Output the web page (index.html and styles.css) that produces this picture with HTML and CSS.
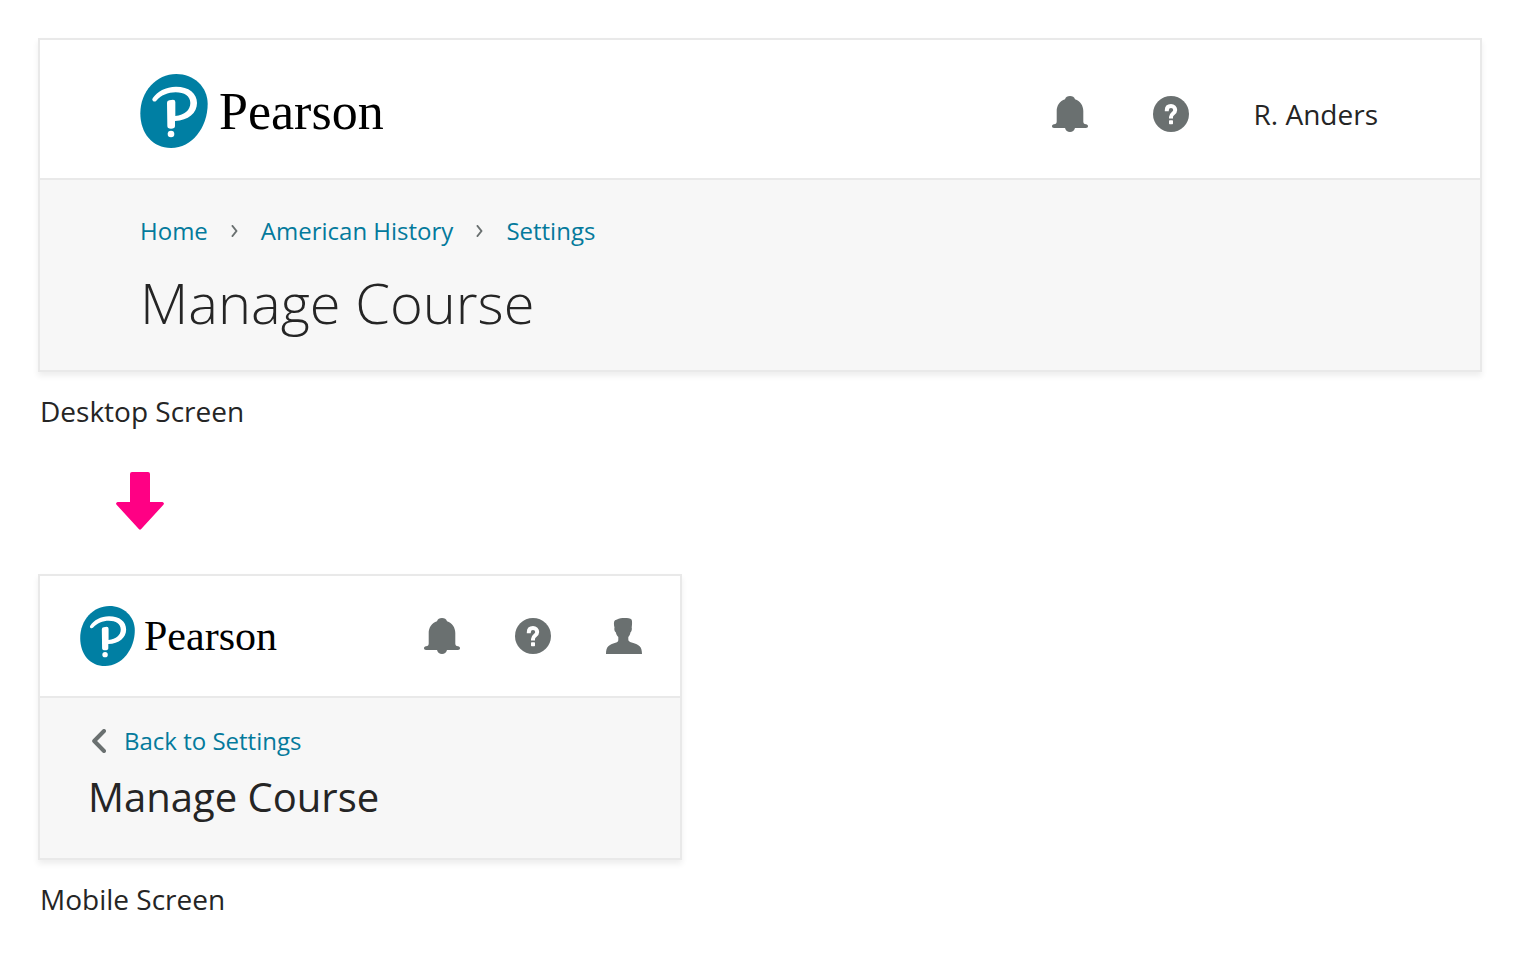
FILE: index.html
```html
<!DOCTYPE html>
<html lang="en">
<head>
<meta charset="utf-8">
<meta name="viewport" content="width=device-width, initial-scale=1">
<title>Manage Course</title>
<link rel="stylesheet" href="styles.css">
</head>
<body>
<svg class="sprite" aria-hidden="true">
  <symbol id="mark" viewBox="0 0 202 222">
    <path fill="#007fa3" d="M108 0C160 0 202 38 202 90C202 160 155 222 92 222C36 222 0 178 0 118C0 52 48 0 108 0Z"/>
    <path fill="#fff" d="M37 73C50 53 76 38 107 38C146 38 170 58 170 87C170 117 144 139 104 141L104 156Q104 164 92 164Q81 164 81 156L80 86Q80 80 87 79L98 77Q105 77 105 84L105 126C133 123 150 108 150 87C150 67 132 55 106 55C83 55 62 64 48 80Q43 85 38 81Q34 78 37 73Z"/>
    <circle cx="92" cy="180" r="10" fill="#fff"/>
  </symbol>
  <symbol id="bell" viewBox="0 0 36 36">
    <path fill="currentColor" d="M18 0C20.500 0 22.300 1.200 23 3.200C28.200 5 31.300 9.500 31.300 15V25.500C31.300 27.200 32 28 34 28.200C35.300 28.400 36 29.200 36 30.300C36 31.400 35.200 32 34 32H23C22.300 34.600 20.500 36 18 36S13.700 34.600 13 32H2C.8 32 0 31.400 0 30.300C0 29.200.7 28.400 2 28.200C4 28 4.700 27.200 4.700 25.500V15C4.700 9.500 7.800 5 13 3.200C13.700 1.200 15.500 0 18 0Z"/>
  </symbol>
  <symbol id="help" viewBox="0 0 36 36">
    <circle cx="18" cy="18" r="18" fill="currentColor"/>
    <path fill="none" stroke="#fff" stroke-width="4" d="M13.800 15.200V14.300C13.800 11.600 15.500 10 18 10S22.200 11.600 22.200 14C22.200 17.500 18 17.500 18 21V22.600"/>
    <rect x="16" y="24.300" width="4" height="3.900" rx=".7" fill="#fff"/>
  </symbol>
  <symbol id="user" viewBox="0 0 36 36">
    <path fill="currentColor" d="M11 1.500C13 .3 16 0 18.500 0C21.500 0 24.500.4 25.500 1.500C26.500 3 26 7 25.700 9.500C26.200 11 25.600 13.500 24.500 14.200C24.100 16.500 23.500 17.800 22.300 19V21.500C22.300 23.500 24 24 26.500 24.800C33 26.700 36 28.500 36 36H0C0 28.500 3 26.700 9.500 24.800C12 24 12.300 23.500 12.300 21.500V19C11 17.800 10.300 16.500 9.800 14.200C8.500 13.500 8 11 8.500 9.500C7.800 7 7.500 3.500 9 2.300Z"/>
  </symbol>
  <symbol id="next" viewBox="0 0 7 12">
    <path fill="none" stroke="#6a7070" stroke-width="2" stroke-linecap="round" stroke-linejoin="round" d="M1.500 1L5.500 6L1.500 11"/>
  </symbol>
  <symbol id="back" viewBox="0 0 18 24">
    <path fill="none" stroke="#6a7070" stroke-width="4" stroke-linecap="round" stroke-linejoin="round" d="M16 2L6.200 12L16 22"/>
  </symbol>
</svg>

<main class="page">
  <figure class="example">
    <div class="card">
      <header class="bar">
        <a class="brand" href="#"><svg class="brand-mark" aria-hidden="true"><use href="#mark"/></svg><span class="brand-name">Pearson</span></a>
        <div class="actions">
          <button class="action" type="button" aria-label="Notifications"><svg class="icon"><use href="#bell"/></svg></button>
          <button class="action" type="button" aria-label="Help"><svg class="icon"><use href="#help"/></svg></button>
          <button class="action" type="button">R. Anders</button>
        </div>
      </header>
      <div class="heading">
        <nav class="crumbs" aria-label="Breadcrumb">
          <a class="link" href="#">Home</a>
          <svg class="next" aria-hidden="true"><use href="#next"/></svg>
          <a class="link" href="#">American History</a>
          <svg class="next" aria-hidden="true"><use href="#next"/></svg>
          <a class="link" href="#">Settings</a>
        </nav>
        <h1 class="title">Manage Course</h1>
      </div>
    </div>
    <figcaption class="caption">Desktop Screen</figcaption>
  </figure>

  <svg class="arrow" viewBox="0 0 48 58" aria-hidden="true"><path fill="#ff0084" d="M16 0H32Q34 0 34 2V30H46.500Q49 31 47.200 33L25.200 57Q24 58.600 22.800 57L.8 33Q-1 31 1.500 30H14V2Q14 0 16 0Z"/></svg>

  <figure class="example">
    <div class="card card-mobile">
      <header class="bar">
        <a class="brand" href="#"><svg class="brand-mark" aria-hidden="true"><use href="#mark"/></svg><span class="brand-name">Pearson</span></a>
        <div class="actions">
          <button class="action" type="button" aria-label="Notifications"><svg class="icon"><use href="#bell"/></svg></button>
          <button class="action" type="button" aria-label="Help"><svg class="icon"><use href="#help"/></svg></button>
          <button class="action" type="button" aria-label="Account"><svg class="icon"><use href="#user"/></svg></button>
        </div>
      </header>
      <div class="heading">
        <a class="link back-link" href="#"><svg class="back" aria-hidden="true"><use href="#back"/></svg>Back to Settings</a>
        <h2 class="title">Manage Course</h2>
      </div>
    </div>
    <figcaption class="caption">Mobile Screen</figcaption>
  </figure>
</main>
</body>
</html>
```

FILE: styles.css
```css
* { box-sizing: border-box; }

body {
  margin: 0;
  background: #fff;
  color: #252525;
  font-family: "Open Sans", "Noto Sans", sans-serif;
}

.sprite { position: absolute; width: 0; height: 0; }

.page { padding: 38px; }

.example { margin: 0; }

.card {
  border: 2px solid #e9e9e9;
  background: #fff;
  box-shadow: 0 4px 6px rgba(0, 0, 0, 0.07);
}

.card-mobile { max-width: 644px; }

.bar {
  display: flex;
  justify-content: space-between;
  align-items: center;
  padding: 34px 102px 30px 100px;
  border-bottom: 2px solid #e9e9e9;
}

.card-mobile .bar { padding: 30px 38px 30px 40px; }

.brand {
  display: flex;
  align-items: center;
  gap: 11px;
  color: #000;
  text-decoration: none;
}

.brand-mark { width: 68px; height: 74px; }

.brand-name {
  padding-top: 2px;
  font: 52px/58px "Liberation Serif", serif;
}

.card-mobile .brand { gap: 9px; }
.card-mobile .brand-mark { width: 55px; height: 60px; }
.card-mobile .brand-name { padding-top: 0; font-size: 42px; line-height: 48px; }

.actions {
  display: flex;
  align-items: center;
  gap: 65px;
  padding-top: 6px;
}

.card-mobile .actions { gap: 55px; padding-top: 0; }

.action {
  display: flex;
  padding: 0;
  border: 0;
  background: none;
  color: inherit;
  font: inherit;
  font-size: 28px;
  line-height: 36px;
  cursor: pointer;
}

.icon { width: 36px; height: 36px; color: #6a7070; }

.heading {
  padding: 34px 100px 30px;
  background: #f7f7f7;
}

.card-mobile .heading { padding: 26px 48px 34px; }

.crumbs {
  display: flex;
  flex-wrap: wrap;
  align-items: center;
  gap: 23px;
}

.link {
  color: #047a9c;
  font-size: 24px;
  line-height: 34px;
  text-decoration: none;
}

.next { width: 7px; height: 12px; }

.back-link { display: flex; align-items: center; gap: 18px; }

.back { width: 18px; height: 24px; }

.title {
  margin: 16px 0 0;
  font-size: 56px;
  font-weight: 300;
  line-height: 76px;
}

.card-mobile .title {
  margin-top: 12px;
  font-size: 40px;
  font-weight: 400;
  line-height: 54px;
}

.caption {
  margin-top: 20px;
  padding-left: 2px;
  font-size: 28px;
  line-height: 38px;
}

.arrow {
  display: block;
  width: 48px;
  height: 58px;
  margin: 42px 0 44px 78px;
}
```
